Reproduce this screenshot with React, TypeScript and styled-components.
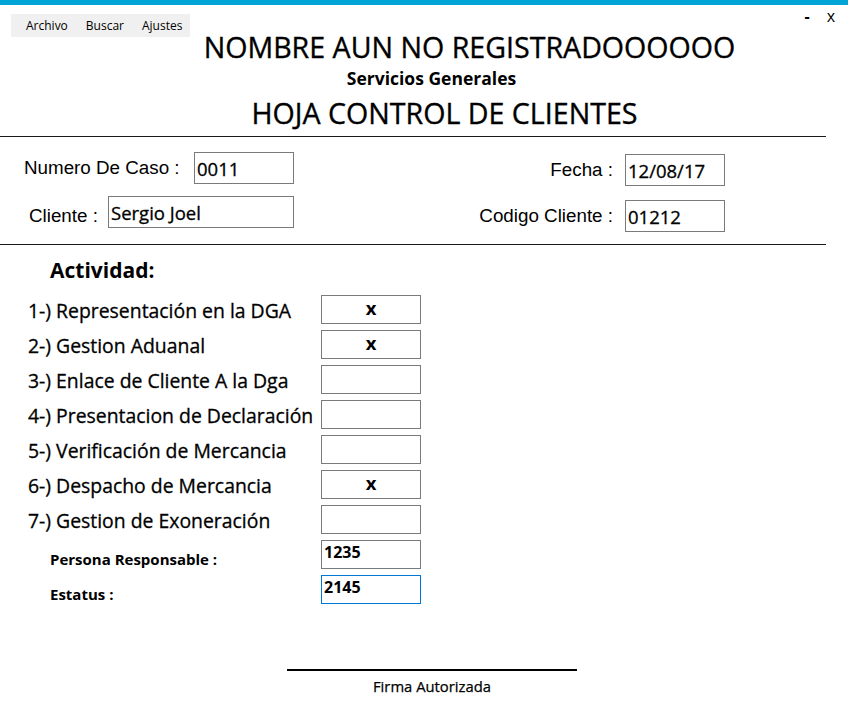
import * as React from 'react';
import styled, { createGlobalStyle } from 'styled-components';

const GlobalStyle = createGlobalStyle`
	html, body {
		margin: 0;
		padding: 0;
		background: #ffffff;
	}
	body {
		font-family: 'Open Sans', 'Noto Sans', sans-serif;
		color: #000000;
		overflow: hidden;
	}
`;

const Window = styled.div`
	width: 848px;
	height: 714px;
	display: flex;
	flex-direction: column;
	background: #ffffff;
	overflow: hidden;
`;

const AccentBar = styled.div`
	height: 5px;
	flex-shrink: 0;
	background-color: #00a4d6;
`;

const Header = styled.header`
	display: grid;
	grid-template-columns: 1fr;
	height: 131px;
`;

const MenuStrip = styled.nav`
	grid-area: 1 / 1;
	justify-self: start;
	align-self: start;
	display: flex;
	align-items: center;
	width: 179px;
	height: 23px;
	margin: 9px 0 0 11px;
	padding-left: 6px;
	box-sizing: border-box;
	background-color: #f0f0f0;
	font-size: 12px;
	z-index: 1;
`;

const MenuItem = styled.span`
	padding: 0 9px;
	color: #000;
`;

const WindowControls = styled.div`
	grid-area: 1 / 1;
	justify-self: end;
	align-self: start;
	display: flex;
	align-items: center;
	gap: 17px;
	margin: 1px 13px 0 0;
	font-size: 16px;
	z-index: 1;
`;

const ControlGlyph = styled.span<{ $bold?: boolean }>`
	font-weight: ${p => (p.$bold ? 700 : 400)};
	line-height: 20px;
`;

const TitleBlock = styled.div`
	grid-area: 1 / 1;
	display: flex;
	flex-direction: column;
	padding-top: 25px;
`;

const TitleLine = styled.div<{ $shift: number; $size: number; $weight?: number; $height: number }>`
	display: flex;
	justify-content: center;
	padding-left: ${p => p.$shift}px;
	font-size: ${p => p.$size}px;
	font-weight: ${p => p.$weight ?? 400};
	line-height: ${p => p.$height}px;
	white-space: nowrap;
	-webkit-text-stroke: ${p => (p.$weight === 700 ? 0 : 0.35)}px #000;
`;

const Divider = styled.hr`
	width: 826px;
	height: 1px;
	margin: 0;
	border: none;
	background-color: #1a1a1a;
	flex-shrink: 0;
`;

const InfoSection = styled.section`
	display: flex;
	flex-direction: column;
	gap: 10px;
	padding: 15px 0 12px;
`;

const InfoRow = styled.div`
	display: flex;
	justify-content: space-between;
	align-items: flex-start;
	padding-right: 123px;
`;

const Field = styled.div<{ $offset?: number }>`
	display: flex;
	align-items: center;
	margin-top: ${p => p.$offset ?? 0}px;
`;

const FieldLabel = styled.label<{ $width?: number; $indent?: number; $right?: boolean; $nudge?: number }>`
	font-family: 'Liberation Sans', Arial, sans-serif;
	font-size: 18.8px;
	white-space: nowrap;
	margin-left: ${p => p.$indent ?? 0}px;
	width: ${p => (p.$width ? `${p.$width}px` : 'auto')};
	text-align: ${p => (p.$right ? 'right' : 'left')};
	margin-right: ${p => (p.$right ? 12 : 0)}px;
	position: relative;
	top: ${p => p.$nudge ?? 0}px;
`;

const TextBox = styled.input<{ $width: number }>`
	width: ${p => p.$width}px;
	height: 32px;
	box-sizing: border-box;
	border: 1px solid #7a7a7a;
	padding: 0 2px;
	margin: 0;
	font-family: 'Open Sans', sans-serif;
	font-size: 18.5px;
	color: #000;
	-webkit-text-stroke: 0.3px #000;
	background: #fff;
	outline: none;
`;

const ActivitySection = styled.section`
	display: flex;
	flex-direction: column;
`;

const SectionHeading = styled.h2`
	margin: 11px 0 0 50px;
	font-size: 21px;
	font-weight: 700;
	line-height: 28px;
`;

const ActivityGrid = styled.div`
	display: grid;
	grid-template-columns: 293px 100px;
	grid-auto-rows: 29px;
	row-gap: 6px;
	margin-top: 11px;
	padding-left: 28px;
`;

const ActivityLabel = styled.span`
	align-self: center;
	font-size: 19.4px;
	white-space: nowrap;
	-webkit-text-stroke: 0.3px #000;
	position: relative;
	top: 1px;
`;

const SmallLabel = styled.span`
	align-self: center;
	padding-left: 22px;
	font-size: 15px;
	font-weight: 700;
	white-space: nowrap;
	position: relative;
	top: 4px;
`;

const CheckBox = styled.div`
	display: flex;
	align-items: center;
	justify-content: center;
	border: 1px solid #7a7a7a;
	box-sizing: border-box;
	font-size: 18.5px;
	font-weight: 700;
	padding-bottom: 4px;
`;

const ValueBox = styled.div<{ $focused?: boolean }>`
	display: flex;
	align-items: flex-start;
	border: 1px solid ${p => (p.$focused ? '#0078d7' : '#7a7a7a')};
	box-sizing: border-box;
	padding: 0 2px;
	font-size: 16px;
	font-weight: 700;
	line-height: 22px;
`;

const Signature = styled.footer`
	display: flex;
	flex-direction: column;
	align-items: center;
	margin-top: 65px;
	padding-left: 16px;
`;

const SignatureLine = styled.div`
	width: 290px;
	height: 2px;
	background-color: #000;
`;

const SignatureText = styled.span`
	margin-top: 5px;
	font-size: 14.8px;
	-webkit-text-stroke: 0.25px #000;
`;

const activities = [
	{ label: '1-) Representación en la DGA', checked: true },
	{ label: '2-) Gestion Aduanal', checked: true },
	{ label: '3-) Enlace de Cliente A la Dga', checked: false },
	{ label: '4-) Presentacion de Declaración', checked: false },
	{ label: '5-) Verificación de Mercancia', checked: false },
	{ label: '6-) Despacho de Mercancia', checked: true },
	{ label: '7-) Gestion de Exoneración', checked: false },
];

const App: React.FC = () => {
	return (
		<Window>
			<GlobalStyle />
			<AccentBar />
			<Header>
				<MenuStrip>
					<MenuItem>Archivo</MenuItem>
					<MenuItem>Buscar</MenuItem>
					<MenuItem>Ajustes</MenuItem>
				</MenuStrip>
				<TitleBlock>
					<TitleLine $shift={91} $size={28.6} $height={34}>
						NOMBRE AUN NO REGISTRADOOOOOO
					</TitleLine>
					<TitleLine $shift={15} $size={17.5} $weight={700} $height={28}>
						Servicios Generales
					</TitleLine>
					<TitleLine $shift={41} $size={28.6} $height={42}>
						HOJA CONTROL DE CLIENTES
					</TitleLine>
				</TitleBlock>
				<WindowControls>
					<ControlGlyph $bold>-</ControlGlyph>
					<ControlGlyph>x</ControlGlyph>
				</WindowControls>
			</Header>
			<Divider />
			<InfoSection>
				<InfoRow>
					<Field>
						<FieldLabel $indent={24} $width={170}>
							Numero De Caso :
						</FieldLabel>
						<TextBox $width={100} readOnly value="0011" />
					</Field>
					<Field $offset={2}>
						<FieldLabel $right>Fecha :</FieldLabel>
						<TextBox $width={100} readOnly value="12/08/17" />
					</Field>
				</InfoRow>
				<InfoRow>
					<Field>
						<FieldLabel $indent={29} $width={79} $nudge={4}>
							Cliente :
						</FieldLabel>
						<TextBox $width={186} readOnly value="Sergio Joel" />
					</Field>
					<Field $offset={4}>
						<FieldLabel $right>Codigo Cliente :</FieldLabel>
						<TextBox $width={100} readOnly value="01212" />
					</Field>
				</InfoRow>
			</InfoSection>
			<Divider />
			<ActivitySection>
				<SectionHeading>Actividad:</SectionHeading>
				<ActivityGrid>
					{activities.map(a => (
						<React.Fragment key={a.label}>
							<ActivityLabel>{a.label}</ActivityLabel>
							<CheckBox>{a.checked ? 'x' : ''}</CheckBox>
						</React.Fragment>
					))}
					<SmallLabel>Persona Responsable :</SmallLabel>
					<ValueBox>1235</ValueBox>
					<SmallLabel>Estatus :</SmallLabel>
					<ValueBox $focused>2145</ValueBox>
				</ActivityGrid>
			</ActivitySection>
			<Signature>
				<SignatureLine />
				<SignatureText>Firma Autorizada</SignatureText>
			</Signature>
		</Window>
	);
};

export default App;
